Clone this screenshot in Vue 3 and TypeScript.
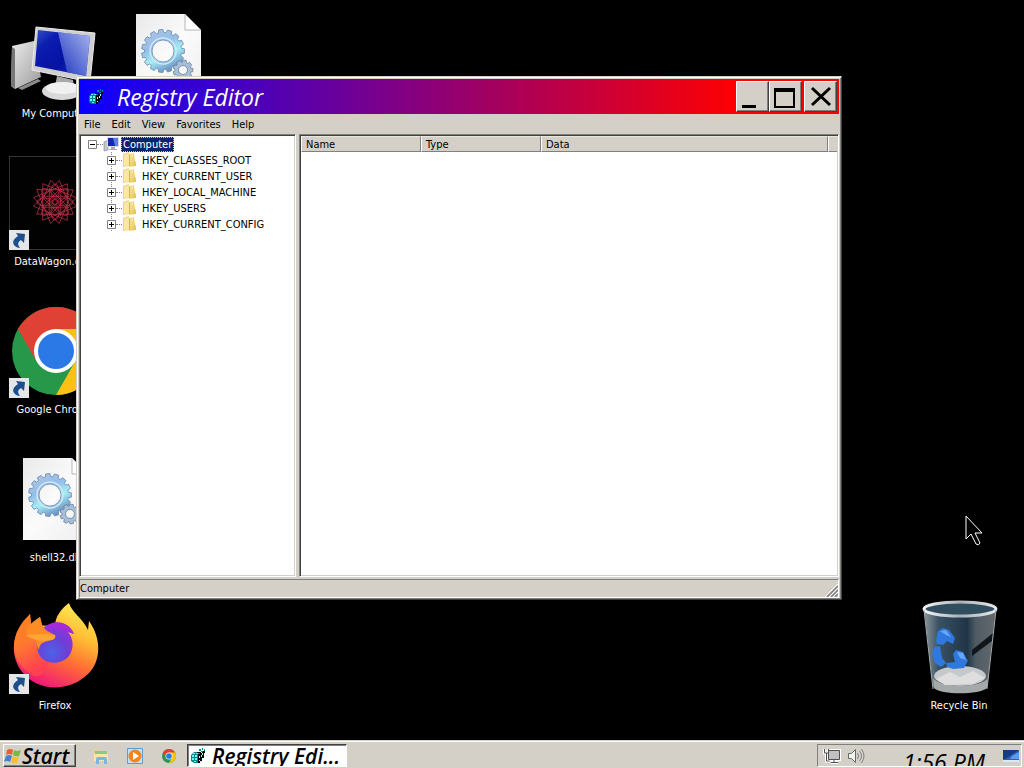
<script setup lang="ts">
import { ref } from 'vue'

interface DesktopItem { id: string; label: string; shortcut: boolean }

const desktopItems: DesktopItem[] = [
  { id: 'computer', label: 'My Computer', shortcut: false },
  { id: 'wagon', label: 'DataWagon.com', shortcut: true },
  { id: 'chrome', label: 'Google Chrome', shortcut: true },
  { id: 'dll', label: 'shell32.dll', shortcut: false },
  { id: 'firefox', label: 'Firefox', shortcut: true },
  { id: 'dll', label: '', shortcut: false },
]

const menus: string[] = ['File', 'Edit', 'View', 'Favorites', 'Help']
const hives: string[] = [
  'HKEY_CLASSES_ROOT',
  'HKEY_CURRENT_USER',
  'HKEY_LOCAL_MACHINE',
  'HKEY_USERS',
  'HKEY_CURRENT_CONFIG',
]
const expanded = ref(true)

function gear(cx: number, cy: number, outer: number, inner: number, hole: number, teeth: number): string {
  const pts: string[] = []
  const step = (Math.PI * 2) / teeth
  for (let i = 0; i < teeth; i++) {
    const a = i * step
    const corners: [number, number][] = [[inner, -0.36], [outer, -0.24], [outer, 0.24], [inner, 0.36]]
    for (const [r, o] of corners) {
      pts.push(`${(cx + r * Math.cos(a + o * step)).toFixed(2)} ${(cy + r * Math.sin(a + o * step)).toFixed(2)}`)
    }
  }
  return `M${pts.join('L')}ZM${cx - hole} ${cy}a${hole} ${hole} 0 1 0 ${hole * 2} 0a${hole} ${hole} 0 1 0 ${-hole * 2} 0Z`
}

function star(cx: number, cy: number, r: number, n: number, skip: number, turn: number): string {
  const pts: string[] = []
  for (let i = 0; i < n; i++) {
    const a = turn + (i * skip * Math.PI * 2) / n
    pts.push(`${(cx + r * Math.cos(a)).toFixed(2)} ${(cy + r * Math.sin(a)).toFixed(2)}`)
  }
  return `M${pts.join('L')}Z`
}

const bigGear = gear(50, 51, 21.5, 18.5, 11, 15)
const smallGear = gear(70, 70, 10, 8, 4.5, 9)
const stars: string[] = [
  star(55, 54, 22, 16, 5, 0.2),
  star(55, 54, 15, 8, 3, 0.4),
]
const petals: number[] = [0, 45, 90, 135, 180, 225, 270, 315]
</script>

<template>
  <div class="screen">
    <svg class="defs" aria-hidden="true">
      <defs>
        <linearGradient id="gScreen" x1="0" y1="0" x2="1" y2="1">
          <stop offset="0" stop-color="#3350cc" /><stop offset=".25" stop-color="#0b1cae" />
          <stop offset=".6" stop-color="#0612a4" /><stop offset="1" stop-color="#2038c0" />
        </linearGradient>
        <linearGradient id="gSheen" x1="0" y1="1" x2="1" y2="0">
          <stop offset="0" stop-color="#1c35c0" /><stop offset="1" stop-color="#c3d0fb" />
        </linearGradient>
        <linearGradient id="gCase" x1="0" y1="0" x2="1" y2="1">
          <stop offset="0" stop-color="#eeeeee" /><stop offset="1" stop-color="#9a9a9a" />
        </linearGradient>
        <linearGradient id="gPaper" x1="0" y1="0" x2="1" y2="1">
          <stop offset="0" stop-color="#e9e9e9" /><stop offset=".5" stop-color="#fbfbfb" /><stop offset="1" stop-color="#eeeeee" />
        </linearGradient>
        <linearGradient id="gGear" x1="0" y1="0" x2=".5" y2="1">
          <stop offset="0" stop-color="#b5c3e4" /><stop offset=".45" stop-color="#93bfe8" />
          <stop offset=".7" stop-color="#a6eef4" /><stop offset="1" stop-color="#6f96c8" />
        </linearGradient>
        <linearGradient id="gFox" x1=".8" y1="0" x2=".35" y2="1">
          <stop offset="0" stop-color="#fff05a" /><stop offset=".35" stop-color="#ffbb33" />
          <stop offset=".65" stop-color="#ff6a35" /><stop offset="1" stop-color="#f0157a" />
        </linearGradient>
        <linearGradient id="gFoxHead" x1="0" y1="0" x2=".3" y2="1">
          <stop offset="0" stop-color="#ff8420" /><stop offset=".5" stop-color="#ff7a2c" /><stop offset="1" stop-color="#ff3f52" />
        </linearGradient>
        <radialGradient id="gGlobe" cx=".4" cy=".75" r=".75">
          <stop offset="0" stop-color="#4b62e8" /><stop offset=".55" stop-color="#6c3fd6" /><stop offset="1" stop-color="#9a30dc" />
        </radialGradient>
        <linearGradient id="gBin" x1="0" y1="0" x2="1" y2="0">
          <stop offset="0" stop-color="#8d979d" /><stop offset=".2" stop-color="#3a5264" />
          <stop offset=".6" stop-color="#1f3547" /><stop offset=".72" stop-color="#4f5b64" /><stop offset="1" stop-color="#65696c" />
        </linearGradient>
        <linearGradient id="gRim" x1="0" y1="0" x2="1" y2="0">
          <stop offset="0" stop-color="#f5f5f5" /><stop offset=".5" stop-color="#aab2b7" /><stop offset="1" stop-color="#e8e8e8" />
        </linearGradient>
        <linearGradient id="gFolder" x1="0" y1="0" x2="1" y2="1">
          <stop offset="0" stop-color="#fbeeb0" /><stop offset="1" stop-color="#e3bf4c" />
        </linearGradient>
        <symbol id="regedit" viewBox="0 0 16 16">
          <path d="M1 7 4 4h5l2 2v7l-3 2H4l-3-2Z" fill="#088" />
          <path d="M3 5h2v1H3zM6 5h2v1H6zM2 7h2v2H2zM5 7h2v2H5zM2 10h2v2H2zM5 10h2v2H5zM4 13h2v1H4z" fill="#6ff6f6" />
          <path d="M8 6h2v9H8zM10 5h2v8h-2zM7 4h4v1H7zM12 4h2v6h-2zM13 3h2v2h-2z" fill="#020202" />
          <path d="M9 8h1v2H9zM11 7h1v2h-1zM12 5h1v2h-1zM9 12h1v1H9z" fill="#9ff" />
          <path d="M9 1h2v2H9zM12 0h1v2h-1zM14 1h1v2h-1zM11 3h2v1h-2z" fill="#088" />
        </symbol>
        <symbol id="chromeMark" viewBox="0 0 88 88">
          <circle cx="44" cy="44" r="44" fill="#27984a" />
          <path d="M44 44 25 55 5.900 22A44 44 0 0 1 82.100 22Z" fill="#df4135" />
          <path d="M44 22h38.100A44 44 0 0 1 44 88L63 55Z" fill="#fdc116" />
          <circle cx="44" cy="44" r="22" fill="#fff" />
          <circle cx="44" cy="44" r="18" fill="#2b79e6" />
        </symbol>
      </defs>
    </svg>

    <main class="desktop">
      <div class="icons">
        <button v-for="(item, i) in desktopItems" :key="i" class="icon" type="button" :aria-label="item.label || 'File'">
          <svg class="art" viewBox="0 0 110 107" aria-hidden="true">
            <template v-if="item.id === 'computer'">
              <path d="M12 46 34 41l7 36-26 12-4-3Z" fill="url(#gCase)" />
              <path d="m12 47 3 2v39l-4-2Z" fill="#777" />
              <path d="m18 88 20-9 3 2-19 9Z" fill="#8b8b8b" />
              <path d="m57 76 16 4 1 8-19-1Z" fill="#a9a9a9" />
              <ellipse cx="62" cy="91" rx="20" ry="9" fill="#d9d9d9" />
              <ellipse cx="63" cy="88" rx="17" ry="6" fill="#f0f0f0" />
              <path d="M36 27 95 33l-5 49-58-12Z" fill="#cfcfcf" stroke="#ececec" />
              <path d="m38 30 52 6-4 40-51-10Z" fill="url(#gScreen)" />
              <path d="m58 32 32 4-4 40-19-4Z" fill="url(#gSheen)" opacity=".85" />
            </template>
            <template v-else-if="item.id === 'wagon'">
              <rect x="9.500" y="8.500" width="92" height="93" fill="#020202" stroke="#303630" />
              <g fill="none" stroke="#b92f45" stroke-width=".8">
                <path v-for="d in stars" :key="d" :d="d" />
                <ellipse v-for="p in petals" :key="p" cx="55" cy="44" rx="4" ry="8" :transform="`rotate(${p} 55 54)`" />
                <circle cx="55" cy="54" r="6" />
              </g>
            </template>
            <use v-else-if="item.id === 'chrome'" href="#chromeMark" x="12" y="11" width="88" height="88" />
            <template v-else-if="item.id === 'dll'">
              <path d="M23 14h49l16 16v66H23Z" fill="url(#gPaper)" />
              <path d="M72 14v16h16Z" fill="#fff" stroke="#999" stroke-width=".7" />
              <path :d="bigGear" fill="url(#gGear)" fill-rule="evenodd" stroke="#6888ad" stroke-width=".8" />
              <circle cx="50" cy="51" r="13" fill="none" stroke="#d3e4f4" stroke-width="1.500" />
              <path :d="smallGear" fill="#a9bfd8" fill-rule="evenodd" stroke="#64809f" stroke-width=".8" />
            </template>
            <template v-else-if="item.id === 'firefox'">
              <path d="M55 34C55 25 61 17 69 11c3 10 13 14 19 27l1-9c13 18 12 41-1 53-18 18-50 18-65-1C10 66 12 43 22 35l8-13 1 11Z" fill="url(#gFox)" />
              <path d="M14 56c0-16 7-25 16-34l1 11 9-8 3 11 7 30c-2 10-8 20-16 18-10-6-19-14-20-28Z" fill="url(#gFoxHead)" />
              <path d="M42 38c6-9 25-12 32 4l-6-2c6 7 6 17 1 24-7 9-23 9-29 0-4-6-5-20 2-26Z" fill="url(#gGlobe)" />
              <path d="M46 35c8-8 23-6 28 7l-8-3c-5-3-12-3-18-1Z" fill="#a22bdc" />
              <path d="M27 41c0-7 5-11 13-16l2 9 5 5 8 4c1 3-1 5-7 6-6 1-9 4-9 9-3-4-1-9-6-12Z" fill="#ff8d26" />
              <path d="m25 43 19-1 11 1c1 3-1 5-6 5-9 2-15 0-24-5Z" fill="#ffa634" />
            </template>
          </svg>
          <svg v-if="item.shortcut" class="badge" viewBox="0 0 20 20" aria-hidden="true">
            <rect width="20" height="20" fill="#e4e6e8" />
            <path d="m7 3 9 1-1 9-3-3c-3 2-4 4-1 8-7-1-10-7-2-12Z" fill="#1d4f8c" />
          </svg>
          <span class="label">{{ item.label }}</span>
        </button>
      </div>

      <button class="icon bin" type="button">
        <svg class="art" viewBox="0 0 110 107" aria-hidden="true">
          <path d="m20 15 9 80c6 7 47 7 54 0l9-80Z" fill="url(#gBin)" />
          <path d="m68 58 21-17-1 8-20 15Z" fill="#11161a" />
          <ellipse cx="56" cy="84" rx="26" ry="10" fill="#c5c9cb" />
          <path d="m29 86 1 10c6 7 46 7 53 0l1-10c-5 10-49 10-55 0Z" fill="#a6a9aa" />
          <path d="m32 87 14-7 10 5 13-6 12 7-12 6-28 1Z" fill="#dedede" />
          <path d="m32 48 2-9 5-3 6 2 6 8-2 6-6-3-4 4-6-1ZM30 55l6-1 2 12 4 5-5 4-6-4-3-8Zm12 16 9-1-2-8 3-4 7 2 5 9-4 7-11 1-6-2Z" fill="#2f78de" />
          <path d="m36 39 6-1 5 7-5-2Zm17 21 6 1 3 7-6-2Z" fill="#69a6fb" />
          <ellipse cx="56" cy="17" rx="36" ry="7" fill="#314e61" stroke="url(#gRim)" stroke-width="3" />
          <path d="m20 18 9 79M92 18l-9 79" stroke="#a8adaf" stroke-width="1" />
        </svg>
        <span class="label">Recycle Bin</span>
      </button>

      <section class="window" aria-label="Registry Editor">
        <header class="title">
          <svg class="title-icon" aria-hidden="true"><use href="#regedit" /></svg>
          <h1>Registry Editor</h1>
          <div class="caption-buttons">
            <button type="button" aria-label="Minimize"><svg viewBox="0 0 30 28"><path d="M5 22h14v3H5z" /></svg></button>
            <button type="button" aria-label="Maximize"><svg viewBox="0 0 30 28"><path fill-rule="evenodd" d="M4 5h21v20H4Zm2 4v14h17V9Z" /></svg></button>
            <button class="close" type="button" aria-label="Close"><svg viewBox="0 0 30 28"><path d="m7 5 18 17M25 5 7 22" fill="none" stroke="#000" stroke-width="3" /></svg></button>
          </div>
        </header>

        <nav class="menu" aria-label="Menu">
          <button v-for="m in menus" :key="m" type="button">{{ m }}</button>
        </nav>

        <div class="panes">
          <div class="pane tree">
            <div class="row">
              <button class="toggle" type="button" aria-label="Toggle Computer" @click="expanded = !expanded">
                <svg viewBox="0 0 9 9"><path d="M.5.5h8v8h-8Z" fill="#fff" stroke="#808080" /><path d="M2 4.500h5" stroke="#000" /></svg>
              </button>
              <span class="dots"></span>
              <svg class="glyph" viewBox="0 0 16 16" aria-hidden="true">
                <path d="M1 6 5 4v10l-4 1Z" fill="#c4c8cc" stroke="#7c8084" stroke-width=".6" />
                <path d="M4 1h12v10H4Z" fill="#d8dade" /><path d="M5 2h10v8H5Z" fill="#1326b4" /><path d="M10 2h5v8h-3Z" fill="#5c7be8" />
                <path d="M8 11h4v2H8ZM6 13h8v1H6Z" fill="#aaa" />
              </svg>
              <span class="key selected">Computer</span>
            </div>
            <ul v-if="expanded">
              <li v-for="h in hives" :key="h" class="row">
                <button class="toggle" type="button" :aria-label="`Expand ${h}`">
                  <svg viewBox="0 0 9 9"><path d="M.5.5h8v8h-8Z" fill="#fff" stroke="#808080" /><path d="M2 4.500h5M4.500 2v5" stroke="#000" /></svg>
                </button>
                <span class="dots"></span>
                <svg class="glyph" viewBox="0 0 16 16" aria-hidden="true">
                  <path d="m7 2 5-1 1 8 1 1v4l-7 1Z" fill="url(#gFolder)" />
                  <path d="M1 2 7 0v14l-6 1Z" fill="#f0d878" />
                  <path d="M2 3 7 1v12l-5 1Z" fill="#f9e9a0" />
                  <path d="M7 2h1v12H7Z" fill="#d9b64c" />
                </svg>
                <span class="key">{{ h }}</span>
              </li>
            </ul>
          </div>
          <div class="pane list">
            <table>
              <thead>
                <tr><th class="fixed">Name</th><th class="fixed">Type</th><th>Data</th><td class="rest"></td></tr>
              </thead>
            </table>
          </div>
        </div>

        <footer class="status">
          <span>Computer</span>
          <svg viewBox="0 0 13 13" aria-hidden="true">
            <path d="M0 13 13 0M4 13l9-9M8 13l5-5" stroke="#fff" />
            <path d="M2 13 13 2M6 13l7-7M10 13l3-3" stroke="#808080" stroke-width="1.500" />
          </svg>
        </footer>
      </section>

      <svg class="cursor" viewBox="0 0 20 32" aria-hidden="true">
        <path d="M1 1v23l5-5 5 10q3 2 4-1l-5-10h7Z" fill="#000" stroke="#fff" />
      </svg>
    </main>

    <footer class="taskbar">
      <button class="start" type="button">
        <svg viewBox="0 0 18 18" aria-hidden="true">
          <path d="M3 3q3-2 6 0L8 8Q5 6 2 8Z" fill="#e8602c" /><path d="M10 3q3 2 7 0l-2 6q-3 1-6-1Z" fill="#78b943" />
          <path d="M2 9q3-2 6 0l-2 6q-3-2-6 0Z" fill="#3f82d2" /><path d="M9 9q3 2 6 1l-2 6q-3 1-6-1Z" fill="#f6bf2e" />
        </svg>
        <span>Start</span>
      </button>
      <div class="quick">
        <button type="button" aria-label="Explorer">
          <svg viewBox="0 0 18 18"><path d="M1 3h6l1 2h8v9H1Z" fill="#ecd27a" /><path d="M3 4h12v4H3Z" fill="#8fc68b" /><path d="M2 7h14v7H2Z" fill="#f6e7a3" /><path d="M4 17v-5q0-2 2-2h7q2 0 2 2v5h-3v-4H7v4Z" fill="#79b6e4" /></svg>
        </button>
        <button type="button" aria-label="Media Player">
          <svg viewBox="0 0 18 18"><path d="M1.500 1.500h15v15h-15Z" fill="#c7dff2" stroke="#5d9bd3" /><circle cx="9" cy="9" r="6.500" fill="#ee8521" /><path d="m7 5 6 4-6 4Z" fill="#fff" /></svg>
        </button>
        <button type="button" aria-label="Chrome"><svg viewBox="0 0 18 18"><use href="#chromeMark" x="2" y="2" width="14" height="14" /></svg></button>
      </div>
      <button class="task" type="button">
        <svg aria-hidden="true"><use href="#regedit" /></svg>
        <span>Registry Edi...</span>
      </button>
      <div class="tray">
        <svg viewBox="0 0 18 18" aria-hidden="true">
          <path d="M5.500 3.500h11v9h-11ZM8 15.500h7M11 13v2M1.500 2v4h4V2M3.500 6v8h3" fill="none" stroke="#fff" stroke-width="3" />
          <path d="M5.500 3.500h11v9h-11ZM8 15.500h7M11 13v2" fill="#c0c0c0" stroke="#505050" />
          <path d="M1.500 2v4h4V2M3.500 6v8h3" fill="none" stroke="#505050" />
        </svg>
        <svg viewBox="0 0 18 18" aria-hidden="true">
          <path d="M1.500 6.500h3l4-4v13l-4-4h-3Z" fill="#f2f2f2" stroke="#686868" />
          <path d="M10.500 6q2 3 0 6M12.500 4q4 5 0 10M14.500 2q5 7 0 14" fill="none" stroke="#808080" />
        </svg>
        <time>1:56 PM</time>
        <svg class="show" viewBox="0 0 16 16" aria-hidden="true">
          <path d="M0 2h16v11H0Z" fill="#2c61b5" /><path d="M0 2h16L2 11H0Z" fill="#153d82" /><path d="m9 8 7-4v7H7Z" fill="#5c9be6" /><path d="M0 12h16v2H0Z" fill="#dce7f4" />
        </svg>
      </div>
    </footer>
  </div>
</template>

<style>
html, body { margin: 0; background: #000; }
</style>

<style scoped>
.screen {
  --face: #d4d0c8;
  --script: "Segoe Script", "Lucida Handwriting", "Open Sans", sans-serif;
  display: flex;
  flex-direction: column;
  min-height: 100vh;
  overflow: hidden;
  background: #000;
  color: #000;
  font: 11px/14px "DejaVu Sans Condensed", "DejaVu Sans", sans-serif;
}
button { margin: 0; padding: 0; border: 0; background: none; color: inherit; font: inherit; }
svg { display: block; flex: none; }
.defs { position: absolute; width: 0; height: 0; }

.desktop { position: relative; flex: 1; min-height: 740px; }
.icons {
  display: grid;
  grid-template-rows: repeat(5, 148px);
  grid-auto-columns: 110px;
  grid-auto-flow: column;
  column-gap: 3px;
  justify-content: start;
}
.icon { position: relative; display: flex; flex-direction: column; align-items: center; width: 110px; height: 148px; color: #fff; }
.art { width: 110px; height: 107px; }
.badge { position: absolute; left: 9px; top: 82px; width: 20px; height: 20px; }
.bin { position: absolute; right: 10px; bottom: 0; }

.window {
  position: absolute;
  inset: 76px 182px 140px 76px;
  display: flex;
  flex-direction: column;
  box-sizing: border-box;
  padding: 1px;
  border: 1px solid;
  border-color: #d4d0c8 #404040 #404040 #d4d0c8;
  background: var(--face);
  box-shadow: inset 1px 1px #fff, inset -1px -1px #808080;
}
.window > * { margin: 0 1px; }
.title {
  display: flex;
  align-items: center;
  height: 35px;
  margin-top: 1px;
  padding: 0 2px 0 9px;
  background: linear-gradient(90deg, #0a00ff, #f00 87%);
  color: #fff;
}
.title-icon { width: 16px; height: 16px; }
.title h1 { flex: 1; margin: 0 0 0 13px; font: italic 23px/30px var(--script); }
.caption-buttons { display: flex; }
.caption-buttons button {
  width: 33px;
  height: 31px;
  box-sizing: border-box;
  border: 1px solid;
  border-color: #fff #404040 #404040 #fff;
  background: var(--face);
  box-shadow: inset -1px -1px #808080;
}
.caption-buttons svg { width: 30px; height: 28px; }
.caption-buttons .close { margin-left: 2px; }

.menu { display: flex; gap: 11px; height: 20px; padding-left: 5px; }
.menu button { padding-top: 1px; }
.panes { display: flex; flex: 1; gap: 3px; min-height: 0; }
.pane {
  box-sizing: border-box;
  border: 1px solid;
  border-color: #808080 #fff #fff #808080;
  background: #fff;
  box-shadow: inset 1px 1px #404040, inset -1px -1px #d4d0c8;
}
.tree { width: 217px; padding: 1px 0 0 8px; }
.list { flex: 1; padding: 1px; }
.row { display: flex; align-items: center; height: 16px; }
.toggle, .toggle svg { width: 9px; height: 9px; }
.dots { width: 6px; border-top: 1px dotted #808080; }
.glyph { width: 16px; height: 16px; }
.key { margin-left: 2px; padding: 0 2px; line-height: 15px; white-space: nowrap; }
.selected { background: #0a246a; color: #fff; outline: 1px dotted #d8c38a; outline-offset: -1px; }
.tree ul {
  margin: 0 0 0 19px;
  padding: 0;
  list-style: none;
  background: linear-gradient(#808080 50%, transparent 50%) 4px 0 / 1px 2px repeat-y;
}

table { width: 100%; border-collapse: separate; border-spacing: 0; table-layout: fixed; }
th, td {
  box-sizing: border-box;
  height: 16px;
  padding: 1px 4px 0;
  border: 1px solid;
  border-color: #e8e6e0 #808080 #808080 #fff;
  background: var(--face);
  font-weight: normal;
  line-height: 13px;
  text-align: left;
}
.fixed { width: 120px; }
.rest { width: 9px; padding: 0; border-right: 0; }

.status {
  display: flex;
  justify-content: space-between;
  align-items: flex-end;
  height: 19px;
  margin-top: 2px;
  box-sizing: border-box;
  border: 1px solid;
  border-color: #808080 #fff #fff #808080;
}
.status span { align-self: center; }
.status svg { width: 13px; height: 13px; }

.cursor { position: absolute; left: 965px; top: 515px; width: 20px; height: 32px; }

.taskbar {
  display: flex;
  align-items: center;
  height: 28px;
  box-sizing: border-box;
  padding: 3px 2px 1px 3px;
  border-top: 1px solid var(--face);
  background: var(--face);
  box-shadow: inset 0 1px #fff;
}
.start, .task, .tray { box-sizing: border-box; height: 23px; overflow: hidden; }
.start {
  display: flex;
  align-items: center;
  width: 73px;
  border: 1px solid;
  border-color: #fff #404040 #404040 #fff;
  box-shadow: inset -1px -1px #808080;
  font: italic 600 21px/20px var(--script);
}
.start svg { width: 18px; height: 18px; }
.quick { display: flex; gap: 16px; margin-left: 16px; }
.quick svg { width: 18px; height: 18px; }
.task {
  display: flex;
  align-items: center;
  width: 160px;
  margin-left: 9px;
  padding-left: 2px;
  border: 1px solid;
  border-color: #404040 #fff #fff #404040;
  background: #fff;
  box-shadow: inset 1px 1px #808080;
  font: italic 600 21px/20px var(--script);
  white-space: nowrap;
}
.task svg { width: 16px; height: 16px; margin-right: 6px; }
.tray {
  display: flex;
  align-items: center;
  gap: 6px;
  width: 205px;
  margin-left: auto;
  padding: 0 2px 0 5px;
  border: 1px solid;
  border-color: #808080 #fff #fff #808080;
}
.tray svg { width: 18px; height: 18px; }
.tray time { margin: 12px 0 0 auto; font: italic 23px/22px var(--script); }
.tray .show { width: 16px; height: 16px; margin-left: 12px; }
</style>
